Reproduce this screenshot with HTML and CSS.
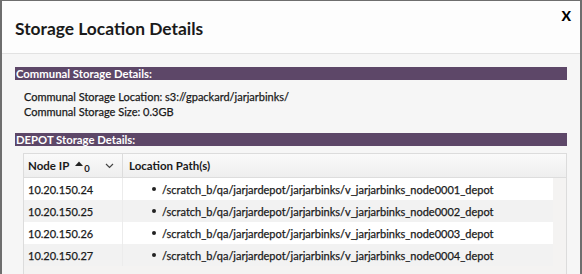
FILE: index.html
```html
<!DOCTYPE html>
<html>
<head>
<meta charset="utf-8">
<link rel="stylesheet" href="styles.css">
</head>
<body>
<div class="dialog">
  <div class="header">
    <h1 class="title">Storage Location Details</h1>
    <span class="close">X</span>
  </div>
  <div class="content">
    <div class="bar">Communal Storage Details:</div>
    <div class="info">
      <div>Communal Storage Location: s3://gpackard/jarjarbinks/</div>
      <div>Communal Storage Size: 0.3GB</div>
    </div>
    <div class="bar bar-depot">DEPOT Storage Details:</div>
    <div class="grid">
      <div class="grid-head">
        <div class="col-ip head-cell">
          <span>Node IP</span>
          <span class="sort"><svg class="tri" width="8" height="5" viewBox="0 0 8 5"><path d="M0 5 L4 0.5 L8 5 Z" fill="#222"/></svg><span class="sort-num">0</span></span>
          <svg class="chev" width="9" height="6" viewBox="0 0 9 6"><path d="M1 1 L4.5 4.5 L8 1" fill="none" stroke="#444" stroke-width="1.2"/></svg>
        </div>
        <div class="col-path head-cell">Location Path(s)</div>
      </div>
      <div class="rows">
        <div class="row">
          <div class="col-ip">10.20.150.24</div>
          <div class="col-path"><span class="dot"></span>/scratch_b/qa/jarjardepot/jarjarbinks/v_jarjarbinks_node0001_depot</div>
        </div>
        <div class="row alt">
          <div class="col-ip">10.20.150.25</div>
          <div class="col-path"><span class="dot"></span>/scratch_b/qa/jarjardepot/jarjarbinks/v_jarjarbinks_node0002_depot</div>
        </div>
        <div class="row">
          <div class="col-ip">10.20.150.26</div>
          <div class="col-path"><span class="dot"></span>/scratch_b/qa/jarjardepot/jarjarbinks/v_jarjarbinks_node0003_depot</div>
        </div>
        <div class="row alt">
          <div class="col-ip">10.20.150.27</div>
          <div class="col-path"><span class="dot"></span>/scratch_b/qa/jarjardepot/jarjarbinks/v_jarjarbinks_node0004_depot</div>
        </div>
      </div>
    </div>
  </div>
</div>
</body>
</html>
```

FILE: styles.css
```css
html, body {
  margin: 0;
  padding: 0;
  height: 100%;
  overflow: hidden;
}
body {
  background: #6e6e6e;
  font-family: Lato, "Open Sans", sans-serif;
  color: #1a1a1a;
}
.dialog {
  margin: 1px 2px 0 2px;
  height: 273px;
  background: #f6f6f6;
  overflow: hidden;
}
.header {
  height: 52px;
  background: #fdfdfd;
  border-bottom: 1px solid #e2e2e2;
  display: flex;
  align-items: center;
  justify-content: space-between;
  padding: 0 9px 0 13px;
}
.title {
  margin: 2px 0 0 0;
  font-size: 17.4px;
  font-weight: 700;
  color: #1a1a1a;
}
.close {
  align-self: flex-start;
  margin-top: 6px;
  font-size: 14px;
  font-weight: 900;
  color: #000;
}
.content {
  padding: 13px 13px 0 13px;
}
.bar {
  height: 13px;
  line-height: 13px;
  background: #5d4768;
  color: #fff;
  font-size: 11.3px;
  font-weight: 700;
  padding-left: 1px;
}
.info {
  margin: 9px 0 14px 9px;
  font-size: 11px;
  line-height: 15px;
  -webkit-text-stroke: 0.25px #1a1a1a;
}
.grid {
  margin: 7px 0 0 8px;
  border: 1px solid #dcdcdc;
  border-bottom: none;
  background: #f4f3f2;
  height: 130px;
}
.grid-head {
  display: flex;
  height: 23px;
  background: linear-gradient(#fafafa, #eeeeee);
  border-bottom: 1px solid #dddddd;
}
.head-cell {
  font-weight: 700;
  font-size: 11.5px;
  display: flex;
  align-items: center;
}
.col-ip {
  width: 99px;
  box-sizing: border-box;
  padding-left: 4px;
  border-right: 1px solid #dcdcdc;
  display: flex;
  align-items: center;
}
.col-path {
  flex: 1;
  padding-left: 6px;
  display: flex;
  align-items: center;
}
.sort {
  display: flex;
  align-items: flex-start;
  margin-left: 6px;
  margin-top: 2px;
}
.tri {
  margin-top: 1px;
}
.sort-num {
  font-size: 9.5px;
  font-weight: 700;
  margin-top: 3px;
  margin-left: 1px;
}
.chev {
  margin-left: auto;
  margin-right: 8px;
}
.rows {
  width: 529px;
}
.row {
  display: flex;
  height: 22px;
  background: #ffffff;
  font-size: 11px;
  -webkit-text-stroke: 0.25px #1a1a1a;
}
.row.alt {
  background: #f2f2f2;
}
.row .col-ip {
  border-right: 1px solid #ececec;
}
.row .col-path {
  padding-left: 29px;
}
.dot {
  width: 4px;
  height: 4px;
  border-radius: 50%;
  background: #222;
  margin-right: 6px;
}
```
